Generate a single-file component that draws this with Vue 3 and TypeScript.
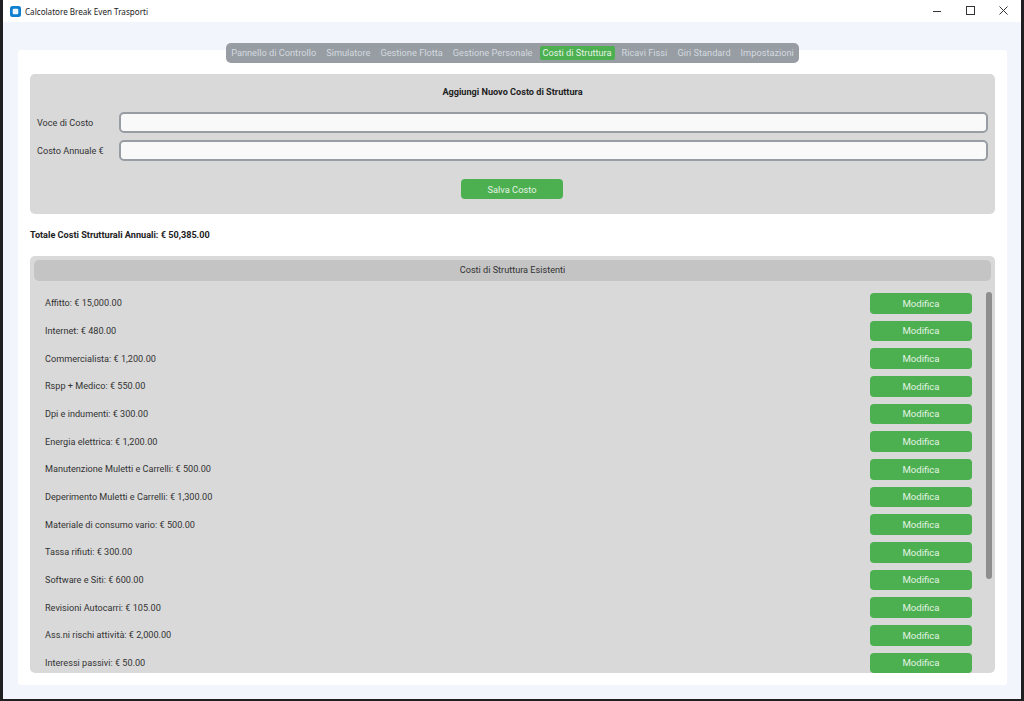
<script setup lang="ts">
const tabs: string[] = ['Pannello di Controllo', 'Simulatore', 'Gestione Flotta', 'Gestione Personale', 'Costi di Struttura', 'Ricavi Fissi', 'Giri Standard', 'Impostazioni']
const activeTab = 'Costi di Struttura'
const costs: string[] = [
  'Affitto: € 15,000.00',
  'Internet: € 480.00',
  'Commercialista: € 1,200.00',
  'Rspp + Medico: € 550.00',
  'Dpi e indumenti: € 300.00',
  'Energia elettrica: € 1,200.00',
  'Manutenzione Muletti e Carrelli: € 500.00',
  'Deperimento Muletti e Carrelli: € 1,300.00',
  'Materiale di consumo vario: € 500.00',
  'Tassa rifiuti: € 300.00',
  'Software e Siti: € 600.00',
  'Revisioni Autocarri: € 105.00',
  'Ass.ni rischi attività: € 2,000.00',
  'Interessi passivi: € 50.00'
]
</script>

<template>
  <div class="frame">
    <div class="window">
      <header class="titlebar">
        <div class="title">
          <svg class="app-icon" width="11" height="11" viewBox="0 0 11 11">
            <rect width="11" height="11" rx="2.5" fill="#0f7fd0" />
            <rect x="2.7" y="2.7" width="5.6" height="5.6" rx="1.2" fill="#eaf6ff" />
          </svg>
          <span>Calcolatore Break Even Trasporti</span>
        </div>
        <div class="controls">
          <svg width="12" height="12" viewBox="0 0 12 12"><path d="M1 6.5h8" stroke="#333" stroke-width="1" fill="none" /></svg>
          <svg width="12" height="12" viewBox="0 0 12 12"><rect x="1.5" y="1.5" width="8" height="8" stroke="#333" stroke-width="1" fill="none" /></svg>
          <svg width="12" height="12" viewBox="0 0 12 12"><path d="M1.5 1.5l8 8M9.5 1.5l-8 8" stroke="#333" stroke-width="1" fill="none" /></svg>
        </div>
      </header>

      <main class="content">
        <nav class="tabs">
          <span v-for="tab in tabs" :key="tab" class="tab" :class="{ active: tab === activeTab }">{{ tab }}</span>
        </nav>

        <section class="card">
          <form class="panel form" @submit.prevent>
            <h2>Aggiungi Nuovo Costo di Struttura</h2>
            <label class="field">
              <span>Voce di Costo</span>
              <input type="text" />
            </label>
            <label class="field">
              <span>Costo Annuale €</span>
              <input type="text" />
            </label>
            <button class="green save" type="submit">Salva Costo</button>
          </form>

          <p class="total">Totale Costi Strutturali Annuali: € 50,385.00</p>

          <div class="panel list">
            <div class="list-head">Costi di Struttura Esistenti</div>
            <div class="rows">
              <div v-for="cost in costs" :key="cost" class="row">
                <span>{{ cost }}</span>
                <button class="green edit" type="button">Modifica</button>
              </div>
            </div>
            <div class="scrollbar"></div>
          </div>
        </section>
      </main>
    </div>
  </div>
</template>

<style>
html, body { margin: 0; background: #1d1d1f; }
</style>

<style scoped>
* { box-sizing: border-box; }
.frame {
  width: 1024px;
  height: 701px;
  padding: 0 3px 2px 3px;
  background: #202022;
  overflow: hidden;
  font-family: Roboto, "Liberation Sans", sans-serif;
  font-size: 9.15px;
  color: #333;
}
.window { height: 100%; display: flex; flex-direction: column; }
.titlebar {
  height: 22px;
  flex: none;
  background: #fff;
  display: flex;
  align-items: center;
  justify-content: space-between;
  padding: 0 11px 0 7px;
}
.title {
  display: flex;
  align-items: center;
  gap: 4px;
  font-family: "Noto Sans", "Open Sans", sans-serif;
  font-size: 8.1px;
  color: #222;
}
.controls { display: flex; gap: 21px; }
.content {
  flex: 1;
  min-height: 0;
  background: #f3f5fd;
  padding: 21px 14px 14px 15px;
  display: flex;
  flex-direction: column;
  align-items: center;
}
.tabs {
  position: relative;
  z-index: 1;
  height: 20px;
  margin-bottom: -13px;
  flex: none;
  display: flex;
  align-items: center;
  padding: 0 2px;
  gap: 4px;
  border-radius: 5px;
  background: #979da2;
}
.tab {
  padding: 0 3px;
  height: 14px;
  line-height: 14px;
  border-radius: 2px;
  color: #d3d9e0;
  font-size: 9.22px;
  white-space: nowrap;
}
.tab.active { background: #4caf50; color: #e3f3e4; }
.card {
  align-self: stretch;
  flex: 1;
  min-height: 0;
  background: #fff;
  border-radius: 3px;
  padding: 24px 12px 12px;
  display: flex;
  flex-direction: column;
}
.panel { background: #d9d9d9; border-radius: 5px; }
.form {
  height: 140px;
  flex: none;
  display: flex;
  flex-direction: column;
  padding: 12px 7px 0;
}
.form h2 {
  margin: 0 0 14px;
  height: 12px;
  line-height: 12px;
  font-size: 9.15px;
  font-weight: 700;
  text-align: center;
  color: #222;
}
.field {
  display: flex;
  align-items: center;
  height: 21px;
  margin-bottom: 7px;
}
.field span { width: 82px; flex: none; }
.field input {
  flex: 1;
  height: 21px;
  border: 2px solid #979da2;
  border-radius: 5px;
  background: #f9f9fa;
  outline: none;
  padding: 0 4px;
}
.green {
  border: 0;
  border-radius: 4px;
  background: #4caf50;
  color: #e3f3e4;
  font-family: inherit;
  font-size: 9.3px;
  padding: 0;
}
.save { width: 102px; height: 20px; align-self: center; margin: 11px 1px 0 0; }
.total {
  flex: none;
  margin: 15px 0 15px;
  height: 12px;
  line-height: 12px;
  font-weight: 700;
  color: #222;
}
.list {
  position: relative;
  flex: 1;
  min-height: 0;
  padding: 4px;
  overflow: hidden;
}
.list-head {
  height: 21px;
  line-height: 21px;
  border-radius: 5px;
  background: #c4c4c4;
  text-align: center;
}
.rows {
  height: 388px;
  margin: 12px 0 0;
  padding: 0 19px 0 11px;
  overflow: hidden;
  display: flex;
  flex-direction: column;
  gap: 7px;
}
.row {
  flex: none;
  height: 20.67px;
  display: flex;
  align-items: center;
  justify-content: space-between;
}
.edit { width: 102px; height: 100%; font-size: 9.6px; }
.scrollbar {
  position: absolute;
  top: 36px;
  right: 3px;
  width: 6px;
  height: 287px;
  border-radius: 3px;
  background: #8e8e8e;
}
</style>
